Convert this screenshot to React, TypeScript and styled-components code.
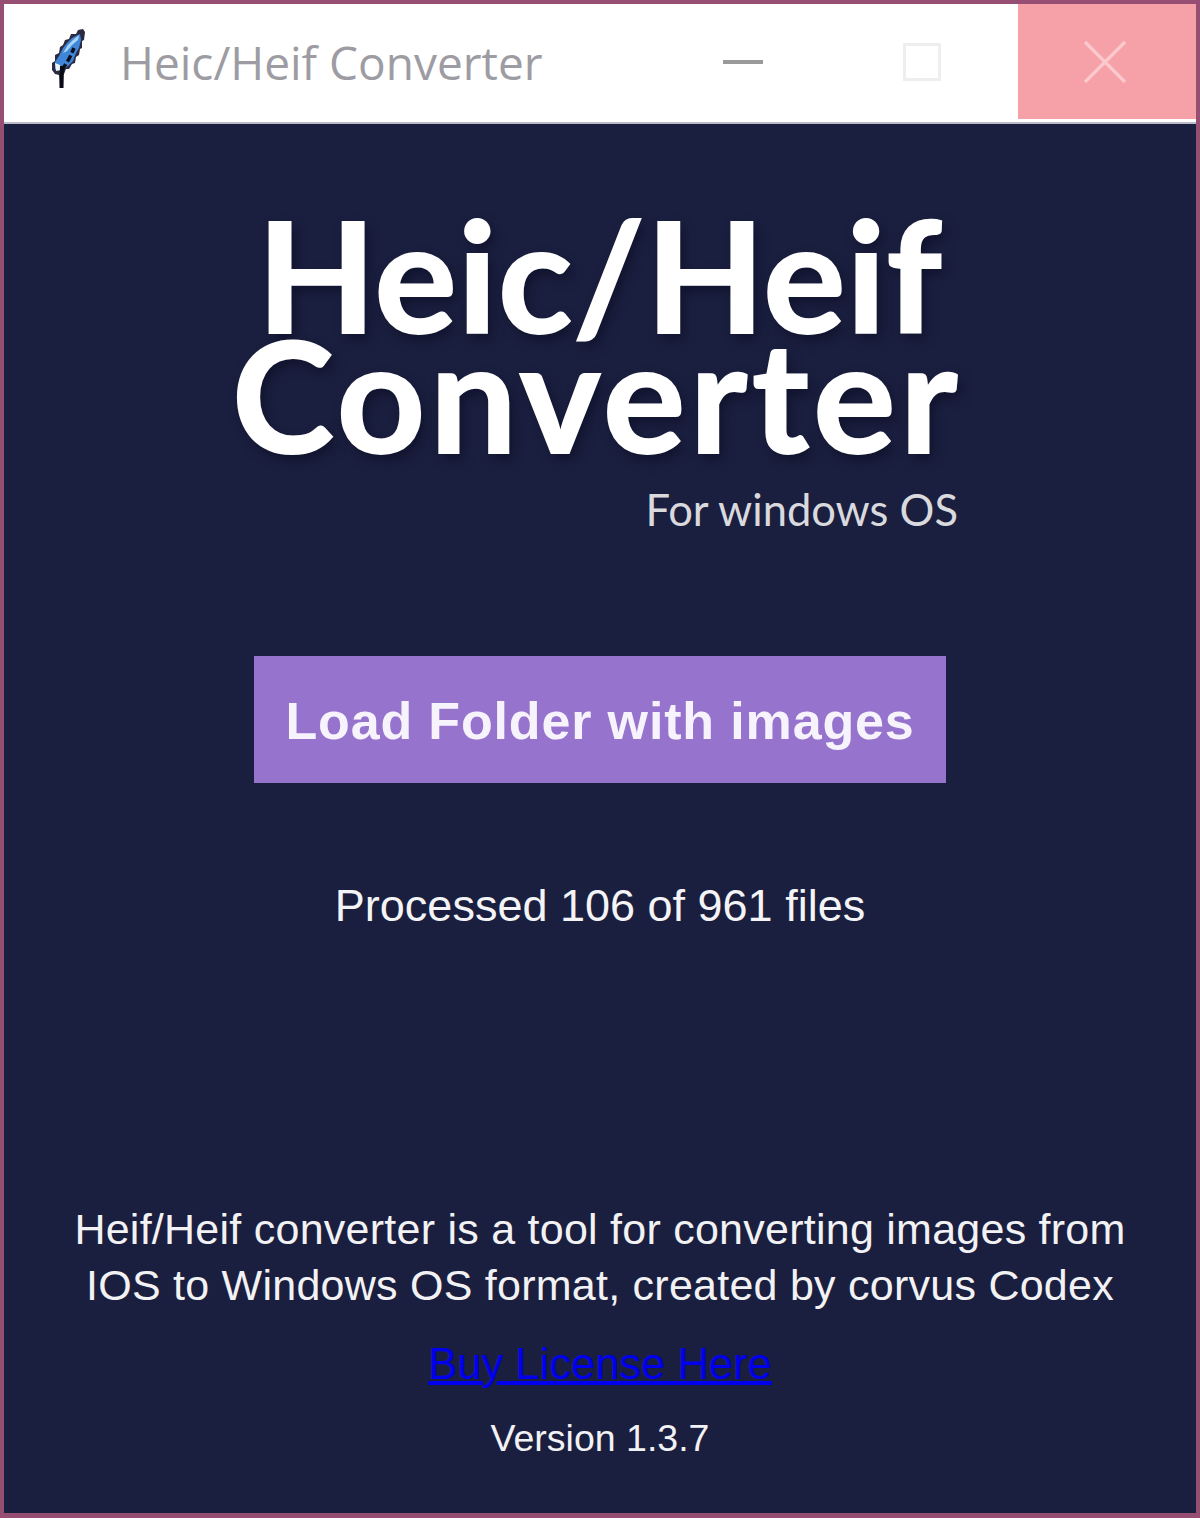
import React from 'react';
import styled, { createGlobalStyle } from 'styled-components';

const GlobalStyle = createGlobalStyle`
  html, body {
    margin: 0;
    padding: 0;
    background: #1b1f3f;
  }
`;

function FeatherIcon() {
  return (
    <svg width='40' height='66' viewBox='0 0 40 66'>
      <path
        d='M36 1 L38 4 L37 12 L35 13 L35 20 L33 21 L32 27 L29 29 L28 35 L25 36 L22 41 L19 41 L17 46 L15 47 L16 60 L13 60 L12 47 L8 46 L5 42 L5 35 L8 33 L8 27 L12 25 L13 19 L16 17 L18 12 L22 11 L24 6 L29 6 L31 2 Z'
        fill='#2a2b40'
      />
      <path
        d='M33 6 L34 12 L32 20 L29 25 L26 33 L21 38 L16 42 L11 43 L8 41 L8 34 L12 28 L16 20 L20 15 L25 10 Z'
        fill='#3f86d8'
      />
      <path d='M32 7 L26 12 L21 17 L16 25 L20 23 L25 17 L31 12 Z' fill='#a9d3f5' />
      <path d='M8 35 L9 43 L13 42 L13 37 Z' fill='#eef3f8' />
      <path d='M15 42 L22 31 L27 20' stroke='#0b0e1c' strokeWidth='3.5' strokeDasharray='7 3' fill='none' />
      <path d='M14.5 60 L15 38' stroke='#080a14' strokeWidth='4' fill='none' />
    </svg>
  );
}

export default function App() {
  return (
    <>
      <GlobalStyle />
      <Window>
        <TitleBar>
          <AppIcon>
            <FeatherIcon />
          </AppIcon>
          <WindowTitle>Heic/Heif Converter</WindowTitle>
          <WindowControls>
            <ControlSlot $shift={10}>
              <MinimizeGlyph />
            </ControlSlot>
            <ControlSlot $shift={12}>
              <MaximizeGlyph />
            </ControlSlot>
            <CloseSlot $shift={4}>
              <svg width='44' height='44' viewBox='0 0 44 44'>
                <path d='M2 2 L42 42 M42 2 L2 42' stroke='#fbc9cd' strokeWidth='3.5' />
              </svg>
            </CloseSlot>
          </WindowControls>
        </TitleBar>
        <Content>
          <Logo>
            <LogoTitle>
              Heic/Heif
              <br />
              <LogoWide>Converter</LogoWide>
            </LogoTitle>
            <LogoTag>For windows OS</LogoTag>
          </Logo>
          <LoadButton>Load Folder with images</LoadButton>
          <Progress>Processed 106 of 961 files</Progress>
          <Footer>
            <Description>
              Heif/Heif converter is a tool for converting images from
              <br />
              IOS to Windows OS format, created by corvus Codex
            </Description>
            <BuyLink href='#'>Buy License Here</BuyLink>
            <Version>Version 1.3.7</Version>
          </Footer>
        </Content>
      </Window>
    </>
  );
}

const Window = styled.div`
  box-sizing: border-box;
  width: 1200px;
  height: 1518px;
  display: flex;
  flex-direction: column;
  border: 4px solid #964f72;
  border-bottom-width: 5px;
  background: #1b1f3f;
  overflow: hidden;
`;

const TitleBar = styled.header`
  height: 118px;
  flex-shrink: 0;
  display: flex;
  align-items: flex-start;
  background: #ffffff;
  border-bottom: 2px solid #b9bbc8;
  box-sizing: content-box;
`;

const AppIcon = styled.div`
  width: 40px;
  height: 66px;
  margin: 24px 0 0 43px;
  filter: blur(0.7px);
`;

const WindowTitle = styled.div`
  margin: 28px 0 0 33px;
  font-family: 'Open Sans', 'Noto Sans', sans-serif;
  font-size: 46px;
  line-height: 60px;
  color: #9d9ca3;
  white-space: nowrap;
`;

const WindowControls = styled.div`
  margin-left: auto;
  display: flex;
  height: 115px;
`;

const ControlSlot = styled.div<{ $shift: number }>`
  box-sizing: border-box;
  width: 180px;
  padding-right: ${({ $shift }) => $shift}px;
  display: flex;
  align-items: center;
  justify-content: center;
`;

const MinimizeGlyph = styled.span`
  width: 40px;
  height: 4px;
  background: #9a9a9a;
`;

const MaximizeGlyph = styled.span`
  box-sizing: border-box;
  width: 38px;
  height: 38px;
  border: 3px solid #eeeef0;
`;

const CloseSlot = styled(ControlSlot)`
  width: 178px;
  background: #f6a0a8;
`;

const Content = styled.main`
  flex: 1;
  display: flex;
  flex-direction: column;
  align-items: center;
  color: #ffffff;
  font-family: 'Liberation Sans', Arial, sans-serif;
`;

const Logo = styled.div`
  width: 730px;
  margin-top: 90px;
  display: flex;
  flex-direction: column;
  align-items: center;
`;

const LogoTitle = styled.h1`
  margin: 0;
  font-family: 'Lato', 'Noto Sans', sans-serif;
  font-weight: 700;
  font-size: 154px;
  line-height: 120px;
  letter-spacing: 1px;
  text-align: center;
  color: #ffffff;
  white-space: nowrap;
  -webkit-text-stroke: 2px #ffffff;
  text-shadow: 4px 6px 12px rgba(8, 10, 30, 0.55);
`;

const LogoWide = styled.span`
  display: inline-block;
  margin-left: -6px;
  letter-spacing: 4.6px;
`;

const LogoTag = styled.div`
  align-self: flex-end;
  margin: 31px 7px 0 0;
  font-family: 'Lato', 'Noto Sans', sans-serif;
  font-size: 43.5px;
  line-height: 48px;
  color: #d9d9de;
`;

const LoadButton = styled.button`
  width: 692px;
  height: 127px;
  margin-top: 123px;
  padding: 3px 0 0;
  border: 0;
  background: #9673cd;
  color: #f7f3fd;
  font-family: 'Liberation Sans', Arial, sans-serif;
  font-weight: 700;
  font-size: 52px;
  letter-spacing: 0.85px;
`;

const Progress = styled.div`
  margin-top: 93px;
  font-size: 45px;
  line-height: 60px;
  color: #f4f4f6;
`;

const Footer = styled.footer`
  margin-top: auto;
  margin-bottom: 53px;
  display: flex;
  flex-direction: column;
  align-items: center;
`;

const Description = styled.p`
  margin: 0;
  font-size: 43px;
  line-height: 56px;
  letter-spacing: 0.25px;
  text-align: center;
  color: #f2f2f4;
`;

const BuyLink = styled.a`
  margin-top: 23px;
  font-size: 43.5px;
  line-height: 56px;
  color: #0000ee;
  text-decoration-thickness: 4px;
`;

const Version = styled.div`
  margin-top: 24px;
  font-size: 37.5px;
  line-height: 44px;
  color: #f2f2f4;
`;
